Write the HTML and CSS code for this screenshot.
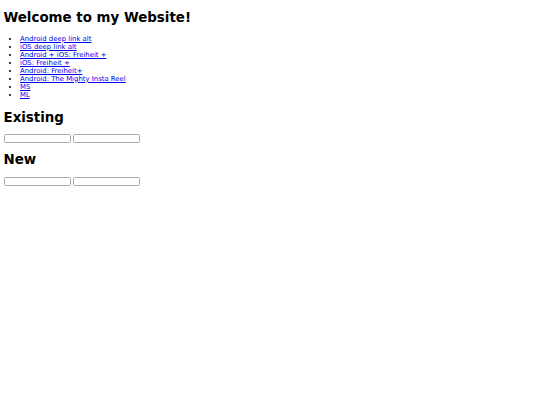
FILE: index.html
```html
<!DOCTYPE html>
<html>
<head>
<meta charset="utf-8">
<title>Welcome</title>
<link rel="stylesheet" href="styles.css">
</head>
<body>
<h1 class="title">Welcome to my Website!</h1>
<ul class="links">
<li><a href="#">Android deep link alt</a></li>
<li><a href="#">iOS deep link alt</a></li>
<li><a href="#">Android + iOS: Freiheit +</a></li>
<li><a href="#">iOS: Freiheit +</a></li>
<li><a href="#">Android: Freiheit+</a></li>
<li><a href="#">Android: The Mighty Insta Reel</a></li>
<li><a href="#">MS</a></li>
<li><a href="#">ML</a></li>
</ul>
<h2 class="section">Existing</h2>
<div class="row"><input class="field" type="text"><input class="field" type="text"></div>
<h2 class="section section-new">New</h2>
<div class="row"><input class="field" type="text"><input class="field" type="text"></div>
</body>
</html>
```

FILE: styles.css
```css
html { background: #fff; }
body {
  margin: 0 3.5px;
  padding-top: 10px;
  font-family: "DejaVu Sans", Verdana, sans-serif;
  font-size: 6.9px;
  line-height: 8px;
  color: #000;
}
.title {
  font-size: 13.4px;
  line-height: 16px;
  margin: 0 0 8.5px;
}
.links {
  margin: 0;
  padding-left: 16.5px;
}
.links a { color: #0000ee; }
.section {
  font-size: 13.4px;
  line-height: 16px;
  margin: 11px 0 8.6px;
}
.section-new { margin-top: 9.4px; }
.row { display: flex; gap: 2px; }
.field {
  width: 67px;
  height: 9px;
  box-sizing: border-box;
  border: 1px solid #aaa;
  border-radius: 1.5px;
  padding: 0;
  margin: 0;
  font-size: 7px;
  background: #fff;
}
```
